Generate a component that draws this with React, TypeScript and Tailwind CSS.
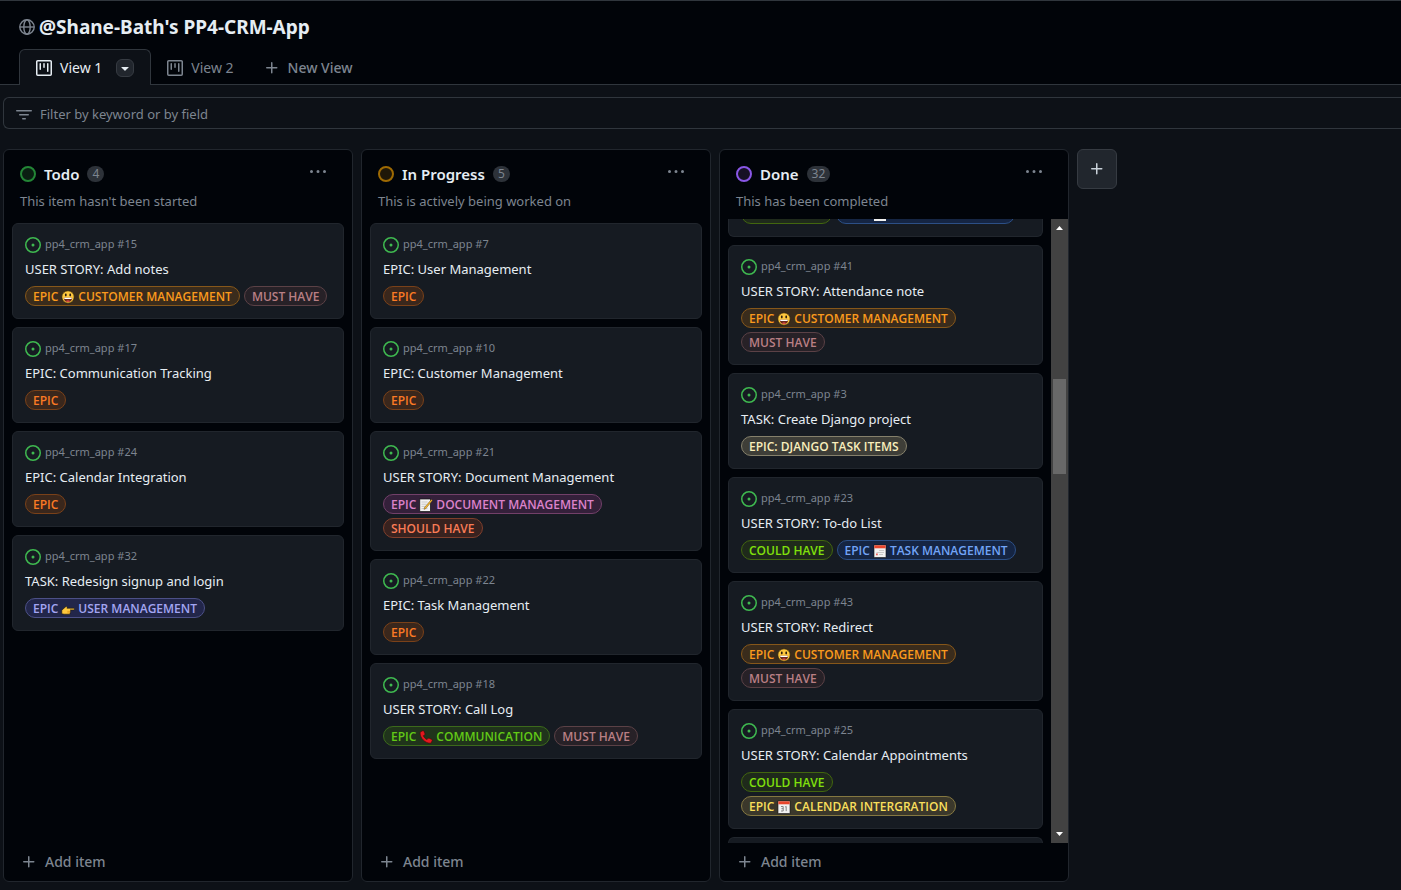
import type { ReactNode } from "react";

/* ---------- icons ---------- */

const ICONS = {
  issue:
    "M8 9.5a1.5 1.5 0 1 0 0-3 1.5 1.5 0 0 0 0 3ZM8 0a8 8 0 1 1 0 16A8 8 0 0 1 8 0ZM1.5 8a6.5 6.5 0 1 0 13 0 6.5 6.5 0 0 0-13 0Z",
  plus: "M7.75 2a.75.75 0 0 1 .75.75V7h4.25a.75.75 0 0 1 0 1.5H8.5v4.25a.75.75 0 0 1-1.5 0V8.5H2.75a.75.75 0 0 1 0-1.5H7V2.75A.75.75 0 0 1 7.75 2Z",
  caret:
    "m4.427 7.427 3.396 3.396a.25.25 0 0 0 .354 0l3.396-3.396A.25.25 0 0 0 11.396 7H4.604a.25.25 0 0 0-.177.427Z",
  kebab:
    "M8 9a1.5 1.5 0 1 0 0-3 1.5 1.5 0 0 0 0 3ZM1.5 9a1.5 1.5 0 1 0 0-3 1.5 1.5 0 0 0 0 3Zm13 0a1.5 1.5 0 1 0 0-3 1.5 1.5 0 0 0 0 3Z",
  filter:
    "M.75 3h14.5a.75.75 0 0 1 0 1.5H.75a.75.75 0 0 1 0-1.5ZM3 7.75A.75.75 0 0 1 3.75 7h8.5a.75.75 0 0 1 0 1.5h-8.5A.75.75 0 0 1 3 7.75Zm3 4a.75.75 0 0 1 .75-.75h2.5a.75.75 0 0 1 0 1.5h-2.5a.75.75 0 0 1-.75-.75Z",
  project:
    "M1.75 0h12.5C15.216 0 16 .784 16 1.75v12.5A1.75 1.75 0 0 1 14.25 16H1.75A1.75 1.75 0 0 1 0 14.25V1.75C0 .784.784 0 1.75 0ZM1.5 1.75v12.5c0 .138.112.25.25.25h12.5a.25.25 0 0 0 .25-.25V1.75a.25.25 0 0 0-.25-.25H1.75a.25.25 0 0 0-.25.25ZM11.75 3a.75.75 0 0 1 .75.75v7.5a.75.75 0 0 1-1.5 0v-7.5a.75.75 0 0 1 .75-.75Zm-8.25.75a.75.75 0 0 1 1.5 0v5.5a.75.75 0 0 1-1.5 0ZM8 3a.75.75 0 0 1 .75.75v3.5a.75.75 0 0 1-1.5 0v-3.5A.75.75 0 0 1 8 3Z",
};

function Icon({ name, className = "" }: { name: keyof typeof ICONS; className?: string }) {
  return (
    <svg viewBox="0 0 16 16" fill="currentColor" fillRule="evenodd" aria-hidden="true" className={`size-4 shrink-0 ${className}`}>
      <path d={ICONS[name]} />
    </svg>
  );
}

function Globe() {
  return (
    <svg viewBox="0 0 16 16" fill="none" stroke="currentColor" strokeWidth="1.4" aria-hidden="true" className="size-4 shrink-0 text-[#7d8590]">
      <circle cx="8" cy="8" r="7.2" />
      <ellipse cx="8" cy="8" rx="3.2" ry="7.2" />
      <path d="M.8 8h14.4" />
    </svg>
  );
}

type EmojiName = "smile" | "point" | "memo" | "phone" | "notepad" | "calendar";

const EMOJI: Record<EmojiName, ReactNode> = {
  smile: (
    <>
      <circle cx="7" cy="7" r="6.2" fill="#ffc83d" stroke="#2a1c08" strokeWidth=".7" />
      <ellipse cx="4.8" cy="5" rx=".9" ry="1.4" fill="#2b1d10" />
      <ellipse cx="9.2" cy="5" rx=".9" ry="1.4" fill="#2b1d10" />
      <path d="M2.8 7.8h8.4c0 2.6-1.8 4.4-4.2 4.4S2.8 10.4 2.8 7.8Z" fill="#6b2a1c" />
      <path d="M3.1 7.8h7.8l-.3 1.3H3.4Z" fill="#fff" />
      <path d="M4.8 11.2c.7-1 3.7-1 4.4 0-1.2 1-3.2 1-4.4 0Z" fill="#e8504a" />
    </>
  ),
  point: (
    <>
      <path
        d="M.8 8.2 4.8 4.7c.6-.5 1.6 0 1.4.8l-.3.7h6.8c.9 0 .9 1.7 0 1.7H9.2c.8.3.7 1.4 0 1.5.5.4.3 1.4-.3 1.5.3.5 0 1.3-.7 1.3H3.2L.8 11.8Z"
        fill="#ffc83d"
        stroke="#20170a"
        strokeWidth=".6"
      />
      <path d="M6.3 9.4h2.6M6.3 10.9h2.3" stroke="#d67d00" strokeWidth=".5" />
    </>
  ),
  memo: (
    <>
      <rect x=".8" y="1" width="10.6" height="12.5" fill="#f4f4f4" stroke="#111" strokeWidth=".7" />
      <path d="M2.5 4h6M2.5 6.2h5M2.5 8.4h4M2.5 10.6h6" stroke="#b5b5b5" strokeWidth=".7" />
      <path d="M5.4 9.6 12.3 1.6l1.1 1L6.7 10.7l-1.7.7Z" fill="#f5b731" stroke="#4a3a1a" strokeWidth=".4" />
    </>
  ),
  phone: (
    <path
      d="M1.8 1.8 3.7.8c.5-.2 1 0 1.2.5l1 2.4c.2.5 0 1-.4 1.200l-1.200.8c.7 1.700 2 3 3.700 3.900l.9-1c.4-.4.9-.5 1.300-.3l2.500 1.100c.5.200.7.700.5 1.200l-.9 1.900c-.2.500-.7.700-1.200.7C6 12.900 1.200 8.300 1.100 3c0-.5.2-1 .7-1.200Z"
      fill="#e3181f"
      stroke="#4d0505"
      strokeWidth=".6"
    />
  ),
  notepad: (
    <>
      <rect x="1" y="1" width="12" height="12.5" fill="#f1f1f1" stroke="#111" strokeWidth=".6" />
      <path d="M1.3 1.3h11.4v3H1.3Z" fill="#e8452c" />
      <path d="M6 6.5h5M3.5 8.5h7.5M6 10.5h4" stroke="#c4c4c4" strokeWidth=".9" />
      <path d="M3 9.5h1.8v1.8H3Z" fill="#e8605a" />
    </>
  ),
  calendar: (
    <>
      <rect x="1" y="1" width="12" height="12.5" fill="#f1f1f1" stroke="#111" strokeWidth=".6" />
      <path d="M1.3 1.3h11.4v3H1.3Z" fill="#e8452c" />
      <path d="M4 6.5h2.2v4.5H4M4.4 8.7h1.8M8.2 7l1-.6v4.7" fill="none" stroke="#777" strokeWidth=".9" />
    </>
  ),
};

function Emoji({ name }: { name: EmojiName }) {
  return (
    <svg viewBox="0 0 14 14" aria-hidden="true" className="size-[14px] shrink-0">
      {EMOJI[name]}
    </svg>
  );
}

/* ---------- data ---------- */

type LabelDef = { text: string; emoji?: EmojiName; after?: string; style: string };

const L = {
  epic: { text: "EPIC", style: "border-[#7a4119] bg-[#3a271c] text-[#fb7a24]" },
  customer: { text: "EPIC", emoji: "smile", after: "CUSTOMER MANAGEMENT", style: "border-[#86571a] bg-[#3a2c1c] text-[#fb9a1c]" },
  must: { text: "MUST HAVE", style: "border-[#5b4146] bg-[#272127] text-[#b97f84]" },
  should: { text: "SHOULD HAVE", style: "border-[#7f3f2c] bg-[#38221f] text-[#f87c56]" },
  could: { text: "COULD HAVE", style: "border-[#42660f] bg-[#1f2a1b] text-[#80e00c]" },
  user: { text: "EPIC", emoji: "point", after: "USER MANAGEMENT", style: "border-[#4c5087] bg-[#22264a] text-[#a2a5f2]" },
  document: { text: "EPIC", emoji: "memo", after: "DOCUMENT MANAGEMENT", style: "border-[#724069] bg-[#34203a] text-[#dc82ca]" },
  comms: { text: "EPIC", emoji: "phone", after: "COMMUNICATION", style: "border-[#3c6a1b] bg-[#20341b] text-[#62c916]" },
  task: { text: "EPIC", emoji: "notepad", after: "TASK MANAGEMENT", style: "border-[#2c4f86] bg-[#152543] text-[#72a4f6]" },
  calendar: { text: "EPIC", emoji: "calendar", after: "CALENDAR INTERGRATION", style: "border-[#857841] bg-[#3b382b] text-[#f9df5c]" },
  django: { text: "EPIC: DJANGO TASK ITEMS", style: "border-[#85806b] bg-[#3e3e38] text-[#f9eebc]" },
} satisfies Record<string, LabelDef>;

type CardDef = { id: number; title: string; labels: LabelDef[] };
type ColumnDef = {
  name: string;
  count: number;
  description: string;
  dot: string;
  cards: CardDef[];
  scrolled?: boolean;
};

const COLUMNS: ColumnDef[] = [
  {
    name: "Todo",
    count: 4,
    description: "This item hasn't been started",
    dot: "border-[#238636] bg-[#0a1f12]",
    cards: [
      { id: 15, title: "USER STORY: Add notes", labels: [L.customer, L.must] },
      { id: 17, title: "EPIC: Communication Tracking", labels: [L.epic] },
      { id: 24, title: "EPIC: Calendar Integration", labels: [L.epic] },
      { id: 32, title: "TASK: Redesign signup and login", labels: [L.user] },
    ],
  },
  {
    name: "In Progress",
    count: 5,
    description: "This is actively being worked on",
    dot: "border-[#9e6a03] bg-[#1e1708]",
    cards: [
      { id: 7, title: "EPIC: User Management", labels: [L.epic] },
      { id: 10, title: "EPIC: Customer Management", labels: [L.epic] },
      { id: 21, title: "USER STORY: Document Management", labels: [L.document, L.should] },
      { id: 22, title: "EPIC: Task Management", labels: [L.epic] },
      { id: 18, title: "USER STORY: Call Log", labels: [L.comms, L.must] },
    ],
  },
  {
    name: "Done",
    count: 32,
    description: "This has been completed",
    dot: "border-[#8957e5] bg-[#161124]",
    scrolled: true,
    cards: [
      { id: 41, title: "USER STORY: Attendance note", labels: [L.customer, L.must] },
      { id: 3, title: "TASK: Create Django project", labels: [L.django] },
      { id: 23, title: "USER STORY: To-do List", labels: [L.could, L.task] },
      { id: 43, title: "USER STORY: Redirect", labels: [L.customer, L.must] },
      { id: 25, title: "USER STORY: Calendar Appointments", labels: [L.could, L.calendar] },
    ],
  },
];

/* ---------- pieces ---------- */

function Label({ text, emoji, after, style }: LabelDef) {
  return (
    <span
      className={`inline-flex h-5 items-center gap-[3px] rounded-full border px-[7px] pt-0.5 font-['Open_Sans','Noto_Sans',sans-serif] text-xs font-semibold whitespace-nowrap ${style}`}
    >
      {text}
      {emoji && <Emoji name={emoji} />}
      {after}
    </span>
  );
}

function Card({ id, title, labels }: CardDef) {
  return (
    <article className="shrink-0 rounded-md border border-[#21262d] bg-[#161b22] p-3">
      <div className="flex h-[18px] items-center gap-1 text-[11px] text-[#7d8590]">
        <Icon name="issue" className="text-[#3fb950]" />
        <span className="pb-0.5">pp4_crm_app #{id}</span>
      </div>
      <h3 className="mt-[5px] text-[13px] leading-5">
        <a href={`#issue-${id}`} className="text-[#e6edf3]">
          {title}
        </a>
      </h3>
      <div className="mt-[7px] flex flex-wrap gap-1">
        {labels.map((l) => (
          <Label key={l.after ?? l.text} {...l} />
        ))}
      </div>
    </article>
  );
}

/* Lower edge of the card that is scrolled out above the list. */
function CardAbove() {
  return (
    <div
      aria-hidden="true"
      className="flex h-[18px] shrink-0 items-end gap-1 overflow-hidden rounded-b-md border border-t-0 border-[#21262d] bg-[#161b22] px-3 pb-3"
    >
      <span className="h-5 w-[91px] rounded-full border border-[#42660f] bg-[#1f2a1b]" />
      <span className="flex h-5 w-[179px] items-end rounded-full border border-[#2c4f86] bg-[#152543] pb-0.5 pl-[37px]">
        <span className="h-3 w-3 bg-[#f1f1f1]" />
      </span>
    </div>
  );
}

/* Upper edge of the card that continues below the list. */
function CardBelow() {
  return <div aria-hidden="true" className="min-h-[5px] grow rounded-t-md border border-b-0 border-[#21262d] bg-[#161b22]" />;
}

function ScrollTrack() {
  return (
    <div aria-hidden="true" className="flex w-[17px] shrink-0 flex-col items-center bg-[#424242]">
      <svg viewBox="0 0 17 17" fill="#fff" className="size-[17px] shrink-0">
        <path d="M5 11h7L8.5 7Z" />
      </svg>
      <div className="flex min-h-0 w-full grow flex-col px-0.5">
        <div className="grow-[143]" />
        <div className="grow-[95] bg-[#686868]" />
        <div className="grow-[352]" />
      </div>
      <svg viewBox="0 0 17 17" fill="#fff" className="size-[17px] shrink-0">
        <path d="M5 6h7l-3.5 4Z" />
      </svg>
    </div>
  );
}

function Column({ name, count, description, dot, cards, scrolled }: ColumnDef) {
  return (
    <section className="flex w-[350px] shrink-0 flex-col rounded-md border border-[#21262d] bg-[#010409]">
      <header className="px-4 pt-3 pb-[7px]">
        <div className="flex h-6 items-center gap-2">
          <span className={`size-4 rounded-full border-2 ${dot}`} />
          <h2 className="text-[15px] font-semibold text-[#e6edf3]">{name}</h2>
          <span className="flex h-4 items-center rounded-full bg-[#2d3239] px-[5px] text-xs text-[#7d8590]">{count}</span>
          <button type="button" aria-label={`More actions for ${name}`} className="mr-2 ml-auto self-start p-0.5 text-[#7d8590]">
            <Icon name="kebab" />
          </button>
        </div>
        <p className="mt-[5px] text-[13px] leading-[21px] text-[#7d8590]">{description}</p>
      </header>
      <div className="flex min-h-0 grow">
        <div className={`flex min-w-0 grow flex-col gap-2 overflow-y-auto px-2 [scrollbar-width:none] ${scrolled ? "" : "pt-1"}`}>
          {scrolled && <CardAbove />}
          {cards.map((c) => (
            <Card key={c.id} {...c} />
          ))}
          {scrolled && <CardBelow />}
        </div>
        {scrolled && <ScrollTrack />}
      </div>
      <button type="button" className="flex h-[38px] shrink-0 items-center gap-2 px-[17px] text-left text-sm font-medium text-[#7d8590]">
        <Icon name="plus" />
        Add item
      </button>
    </section>
  );
}

export default function App() {
  return (
    <div className="flex h-screen flex-col overflow-hidden bg-[#0d1117] font-['Noto_Sans','Open_Sans',sans-serif] text-[#e6edf3]">
      <header className="border-t border-[#30363d] bg-[#010409]">
        <div className="flex items-center gap-1 px-[19px] pt-3 pb-2">
          <Globe />
          <h1 className="text-[19px] leading-7 font-bold">@Shane-Bath's PP4-CRM-App</h1>
        </div>
        <nav className="flex h-9 border-b border-[#30363d] px-[19px] text-sm">
          <div className="-mb-px flex items-center rounded-t-md border border-b-0 border-[#30363d] bg-[#0d1117] px-4">
            <a href="#view-1" className="flex items-center gap-2">
              <Icon name="project" />
              View 1
            </a>
            <button
              type="button"
              aria-label="View options"
              className="ml-3.5 flex size-[18px] items-center justify-center rounded-md border border-[#363b42] bg-[#21262d]"
            >
              <Icon name="caret" />
            </button>
          </div>
          <a href="#view-2" className="flex items-center gap-2 px-4 pt-[3px] text-[#7d8590]">
            <Icon name="project" />
            View 2
          </a>
          <button type="button" className="ml-3 flex items-center gap-2 px-0.5 pt-[3px] font-medium text-[#7d8590]">
            <Icon name="plus" />
            New View
          </button>
        </nav>
      </header>

      <main className="flex min-h-0 grow flex-col gap-5 pt-3 pb-2 pl-[3px]">
        <label className="flex h-8 shrink-0 items-center gap-2 rounded-l-md border border-r-0 border-[#30363d] px-3 pt-[3px] text-[#7d8590]">
          <Icon name="filter" />
          <input
            type="text"
            aria-label="Filter by keyword or by field"
            placeholder="Filter by keyword or by field"
            className="min-w-0 grow bg-transparent text-[13px] outline-none placeholder:text-[#7d8590]"
          />
        </label>
        <div className="flex min-h-0 grow gap-2">
          {COLUMNS.map((c) => (
            <Column key={c.name} {...c} />
          ))}
          <button
            type="button"
            aria-label="Add a new column"
            className="flex size-10 shrink-0 items-center justify-center rounded-md border border-[#363b42] bg-[#21262d] text-[#c9d1d9]"
          >
            <Icon name="plus" />
          </button>
        </div>
      </main>
    </div>
  );
}
